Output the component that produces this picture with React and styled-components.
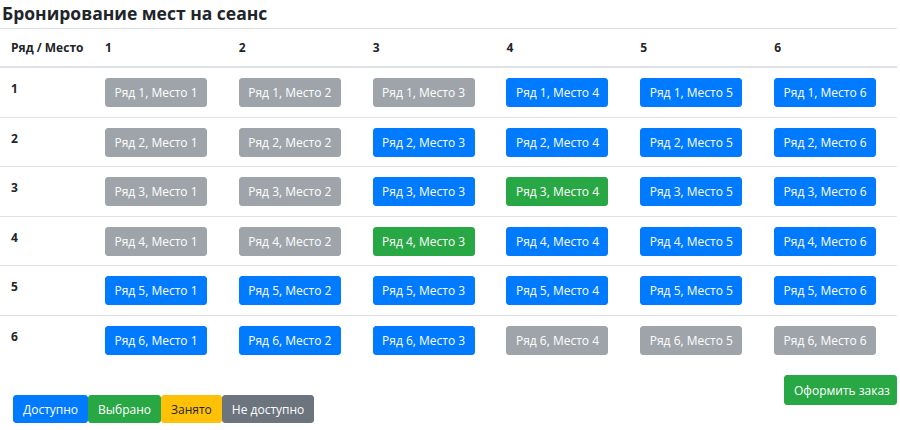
import React, { useState } from 'react';
import styled, { createGlobalStyle } from 'styled-components';

const GlobalStyle = createGlobalStyle`
  body {
    margin: 0;
    background: #fff;
    color: #212529;
    font-family: "Open Sans", "Liberation Sans", sans-serif;
  }
`;

// цвета как в bootstrap 4
const colors = {
  free: { bg: '#007bff', fg: '#fff' },
  selected: { bg: '#28a745', fg: '#fff' },
  taken: { bg: '#ffc107', fg: '#212529' },
  disabled: { bg: '#6c757d', fg: '#fff' },
};

const Page = styled.div`
  width: 900px;
`;

const Title = styled.h4`
  margin: 0;
  padding: 3px 2px 5px;
  font-size: 17.5px;
  font-weight: 700;
  line-height: 20px;
`;

const Table = styled.table`
  width: 897px;
  border-collapse: collapse;
  table-layout: fixed;
`;

const HeadCell = styled.th`
  text-align: left;
  vertical-align: bottom;
  font-size: 12px;
  font-weight: 700;
  padding: 11px 11px 10px;
  border-top: 1px solid #dee2e6;
  border-bottom: 2px solid #dee2e6;
  line-height: 16px;
  white-space: nowrap;
`;

const Cell = styled.td`
  vertical-align: top;
  padding: 10px 11px 9.5px;
  border-top: 1px solid #dee2e6;
  font-size: 12px;
  font-weight: ${(p) => (p.$bold ? 700 : 400)};
  line-height: 18px;
  ${(p) => p.$bold && 'padding-top: 12px;'}
`;

const Btn = styled.button`
  display: inline-block;
  font-family: inherit;
  font-size: 12px;
  line-height: 19px;
  padding: 4px 9px;
  border: 1px solid ${(p) => colors[p.$kind].bg};
  border-radius: 3px;
  background: ${(p) => colors[p.$kind].bg};
  color: ${(p) => colors[p.$kind].fg};
  opacity: ${(p) => (p.disabled ? 0.65 : 1)};
  cursor: ${(p) => (p.disabled ? 'default' : 'pointer')};
  white-space: nowrap;
`;

const SeatBtn = styled(Btn)`
  width: 102px;
  padding: 4px 0;
`;

const Footer = styled.div`
  display: flex;
  justify-content: space-between;
  align-items: flex-start;
  padding-top: 11px;
`;

const Legend = styled.div`
  display: flex;
  margin: 20px 0 0 13px;
`;

const LegendBtn = styled(Btn)`
  height: 28px;
  padding: 3px 9px;
  border-radius: 3px;
`;

const OrderBtn = styled(Btn)`
  width: 113px;
  height: 30px;
  margin-right: 3px;
`;

const cols = [1, 2, 3, 4, 5, 6];

// недоступные места
const blocked = {
  1: [1, 2, 3],
  2: [1, 2],
  3: [1, 2],
  4: [1, 2],
  5: [],
  6: [4, 5, 6],
};

const App = () => {
  const [selected, setSelected] = useState(['3-4', '4-3']);

  const toggle = (key) => {
    setSelected((s) => (s.includes(key) ? s.filter((k) => k !== key) : [...s, key]));
  };

  return (
    <Page>
      <GlobalStyle />
      <Title>Бронирование мест на сеанс</Title>
      <Table>
        <colgroup>
          <col style={{ width: 94 }} />
          {cols.map((c) => (
            <col key={c} />
          ))}
        </colgroup>
        <thead>
          <tr>
            <HeadCell>Ряд / Место</HeadCell>
            {cols.map((c) => (
              <HeadCell key={c}>{c}</HeadCell>
            ))}
          </tr>
        </thead>
        <tbody>
          {cols.map((row) => (
            <tr key={row}>
              <Cell $bold>{row}</Cell>
              {cols.map((seat) => {
                const key = `${row}-${seat}`;
                const isBlocked = blocked[row].includes(seat);
                const kind = isBlocked ? 'disabled' : selected.includes(key) ? 'selected' : 'free';
                return (
                  <Cell key={seat}>
                    <SeatBtn $kind={kind} disabled={isBlocked} onClick={() => toggle(key)}>
                      Ряд {row}, Место {seat}
                    </SeatBtn>
                  </Cell>
                );
              })}
            </tr>
          ))}
        </tbody>
      </Table>
      <Footer>
        <Legend>
          <LegendBtn $kind="free">Доступно</LegendBtn>
          <LegendBtn $kind="selected">Выбрано</LegendBtn>
          <LegendBtn $kind="taken">Занято</LegendBtn>
          <LegendBtn $kind="disabled">Не доступно</LegendBtn>
        </Legend>
        <OrderBtn $kind="selected">Оформить заказ</OrderBtn>
      </Footer>
    </Page>
  );
};

export default App;
